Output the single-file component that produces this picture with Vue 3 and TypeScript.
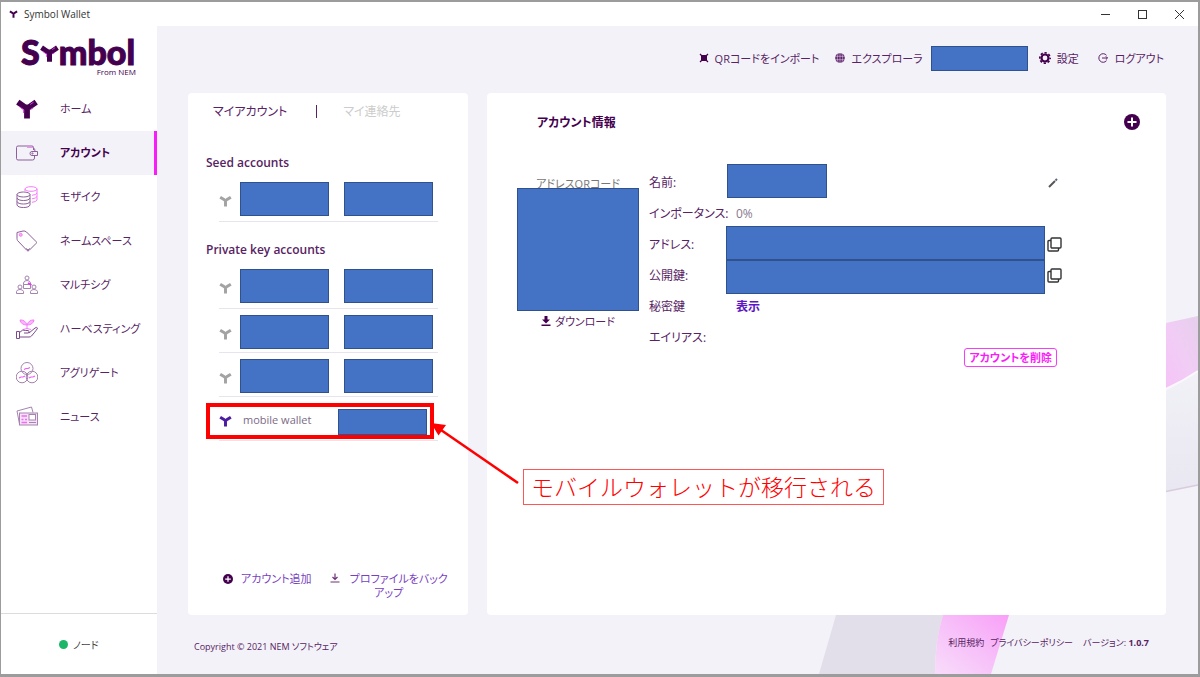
<script setup lang="ts">
interface NavItem {
  icon: string
  label: string
  active?: boolean
}

const navItems: NavItem[] = [
  { icon: 'i-home', label: 'ホーム' },
  { icon: 'i-wallet', label: 'アカウント', active: true },
  { icon: 'i-coins', label: 'モザイク' },
  { icon: 'i-tag', label: 'ネームスペース' },
  { icon: 'i-people', label: 'マルチシグ' },
  { icon: 'i-harvest', label: 'ハーベスティング' },
  { icon: 'i-aggregate', label: 'アグリゲート' },
  { icon: 'i-news', label: 'ニュース' },
]

const privateAccounts: number[] = [1, 2, 3]
</script>

<template>
  <svg class="defs" aria-hidden="true">
    <symbol id="i-y" viewBox="0 0 22 20">
      <path d="M2 3.500L9 8Q11 9 13 8L20 3.500M11 8V19.500" fill="none" stroke="currentColor" stroke-width="5" />
    </symbol>
    <symbol id="i-home" viewBox="0 0 22 22">
      <path d="M1.800 4.200L8.500 8.800Q11 10 13.500 8.800L20.200 4.200M11 9V20.500" fill="none" stroke="#44004e" stroke-width="5.800" />
      <path d="M3.500 8.800L7.600 11.800V15M14.200 6.500L17.500 4.200M14.500 11.500L17 10" fill="none" stroke="#e23bea" stroke-width="1" />
    </symbol>
    <symbol id="i-wallet" viewBox="0 0 22 22">
      <g fill="none" stroke="#8d5f9b">
        <path d="M17.500 8V5.500Q17.500 4 16 4H2Q.5 4 .5 5.500V16.500Q.5 18 2 18H16.500Q18.500 18 18.500 16V13.500" />
        <path d="M21.500 9.500H16A2 2 0 0 0 16 13.500H21.500Z" />
        <path d="M17.500 6Q19 6.500 19 9.500" />
        <circle cx="16.500" cy="11.500" r=".6" />
      </g>
      <path d="M11 5.500H17" stroke="#f48df7" />
    </symbol>
    <symbol id="i-coins" viewBox="0 0 22 22">
      <g fill="none" stroke="#f77bfa">
        <ellipse cx="15" cy="3" rx="6" ry="2.300" />
        <path d="M9 3V5M21 3V14Q20 16 16 16.300M21 7Q20 9 16 9.300M21 10.500Q20 12.500 16 12.800" />
      </g>
      <g fill="none" stroke="#8d5f9b">
        <ellipse cx="7.500" cy="8.500" rx="6.500" ry="2.500" />
        <path d="M1 8.500V19Q2 21.500 7.500 21.500T14 19V8.500M1 12Q2 14.500 7.500 14.500T14 12M1 15.500Q2 18 7.500 18T14 15.500" />
      </g>
    </symbol>
    <symbol id="i-tag" viewBox="0 0 22 22">
      <path d="M1 2.500L7 1Q9 .7 10.500 2L20 11.500Q21 12.500 20 13.500L13 20.500Q12 21.500 11 20.500L1.500 10.500Q1 9.500 1 8.500Z" fill="none" stroke="#8d5f9b" />
      <path d="M10 18.500L12 20L14 18.500" fill="none" stroke="#8d5f9b" />
      <circle cx="4.700" cy="4.800" r="1.500" fill="#fba9fb" stroke="#f77bfa" />
    </symbol>
    <symbol id="i-people" viewBox="0 0 22 22">
      <g fill="none" stroke="#a583b0">
        <circle cx="11" cy="4" r="2" />
        <path d="M7.500 10.500V9Q8 6.500 11 6.500T14.500 9V10.500Z" />
        <circle cx="4" cy="13" r="2" />
        <path d="M.5 19.500V17.500Q1 15.500 4 15.500T7.500 17.500V19.500Z" />
        <circle cx="18" cy="13" r="2" />
        <path d="M14.500 19.500V17.500Q15 15.500 18 15.500T21.500 17.500V19.500Z" />
        <path d="M7.500 10.500V14.500H14.500V10.500" />
      </g>
      <path d="M12 9L15.500 11" stroke="#e23bea" stroke-width="1.500" />
    </symbol>
    <symbol id="i-harvest" viewBox="0 0 22 22">
      <g fill="#fcb6fc" stroke="#f77bfa">
        <path d="M11 7Q9 1.500 4 2Q5 7 11 7Q13 1.500 18 2Q17 7 11 7Z" />
        <path d="M11 7V11M7 11.500Q11 9.500 15 11.500" fill="none" />
      </g>
      <path d="M.5 13.500H3.500V20.500H.5ZM3.500 14.500Q7 10.500 9.500 12.500H12Q14 13 12.500 15H8M13 15L19 10Q21 8.800 21.500 10Q21.500 11 15.500 18Q14.500 19 13 19H3.500" fill="none" stroke="#7c4b8b" />
    </symbol>
    <symbol id="i-aggregate" viewBox="0 0 22 22">
      <g fill="none" stroke="#a583b0">
        <circle cx="11" cy="6.500" r="6" />
        <circle cx="6" cy="15" r="5.800" />
        <circle cx="16" cy="15" r="5.800" />
      </g>
      <path d="M8 7.500L10 6.500L12 6.500L14 5.500M3 16L5 15L7 15L9 14M13 16L15 15L17 15L19 14" fill="none" stroke="#ee5cf3" stroke-width="1.200" />
    </symbol>
    <symbol id="i-news" viewBox="0 0 22 22">
      <g fill="none" stroke="#a583b0">
        <path d="M3.500 18L1 5L15.500 1L17 6.500" />
        <rect x="3.500" y="7" width="18" height="12" fill="#f7e2f8" />
        <rect x="13" y="8.500" width="6.500" height="5.500" fill="#fff" />
        <path d="M13 16.500H20" />
      </g>
      <path d="M5.500 10H11M5.500 13.500H7.500M9 13.500H11M5.500 16.500H11" stroke="#f26af6" stroke-width="1.500" />
    </symbol>
    <symbol id="i-plus" viewBox="0 0 16 16">
      <circle cx="8" cy="8" r="8" fill="#44004e" />
      <path d="M8 3.500V12.500M3.500 8H12.500" stroke="#fff" stroke-width="2" />
    </symbol>
    <symbol id="i-copy" viewBox="0 0 15 15">
      <g fill="none" stroke="#333" stroke-width="1.400">
        <rect x="4" y="1" width="10" height="10" rx="1" />
        <path d="M4 3.500H2Q1 3.500 1 4.500V13Q1 14 2 14H10.500Q11.500 14 11.500 13V11" />
      </g>
    </symbol>
  </svg>

  <div class="window">
    <header class="titlebar">
      <svg class="tb-logo"><use href="#i-y" /></svg>
      <span>Symbol Wallet</span>
      <div class="win-btns">
        <button type="button" aria-label="最小化"><svg viewBox="0 0 11 11"><path d="M1 5.500H10" /></svg></button>
        <button type="button" aria-label="最大化"><svg viewBox="0 0 11 11"><rect x="1.500" y="1.500" width="8" height="8" /></svg></button>
        <button type="button" aria-label="閉じる"><svg viewBox="0 0 11 11"><path d="M1 1L10 10M10 1L1 10" /></svg></button>
      </div>
    </header>

    <div class="body">
      <aside class="sidebar">
        <div class="logo">
          <div class="wordmark">S<svg class="logo-y" viewBox="0 0 22 22"><use href="#i-home" /></svg>mbol</div>
          <div class="from">From NEM</div>
        </div>
        <nav>
          <a v-for="item in navItems" :key="item.label" href="#" :class="{ active: item.active }">
            <svg><use :href="'#' + item.icon" /></svg>
            <span>{{ item.label }}</span>
          </a>
        </nav>
        <div class="node"><i></i><span>ノード</span></div>
      </aside>

      <main class="main">
        <svg class="backdrop" viewBox="157 26 1041 648" preserveAspectRatio="xMaxYMax slice" aria-hidden="true">
          <defs>
            <linearGradient id="g-pink" x1="0" y1="1" x2="1" y2="0">
              <stop offset="0" stop-color="#f8dcfa" />
              <stop offset=".5" stop-color="#f7c0f9" />
              <stop offset="1" stop-color="#f99ff8" />
            </linearGradient>
            <linearGradient id="g-band" x1="0" y1="1" x2="1" y2="0">
              <stop offset="0" stop-color="#f5c3f7" />
              <stop offset=".5" stop-color="#f1cdf5" />
              <stop offset="1" stop-color="#e6cfec" />
            </linearGradient>
            <linearGradient id="g-fade" x1="0" y1="0" x2="0" y2="1">
              <stop offset="0" stop-color="#f1f1f7" />
              <stop offset="1" stop-color="#e9e7f1" />
            </linearGradient>
          </defs>
          <path d="M836 615H943Q935 640 935 674H819Z" fill="#e2dfea" />
          <path d="M943 615H1009L991 674H935Q935 640 943 615Z" fill="url(#g-pink)" />
          <path d="M1166 389L1198 371V485L1166 491Z" fill="url(#g-fade)" />
          <path d="M1166 323L1198 316V371Q1183 381 1166 389Z" fill="url(#g-band)" />
          <path d="M1166 389Q1183 381 1198 371" fill="none" stroke="#fbf8fd" stroke-width="2" />
          <path d="M1166 491.500L1198 485" stroke="#d8cbdc" stroke-width="1.500" />
        </svg>

        <div class="topbar">
          <a href="#" class="t-qr">
            <svg class="s10" viewBox="0 0 10 10"><path d="M2 2H8V8H2Z" fill="#44004e" /><path d="M1 1L3 3M9 1L7 3M1 9L3 7M9 9L7 7" fill="none" stroke="#44004e" stroke-width="1.200" /></svg>
            QRコードをインポート
          </a>
          <a href="#" class="t-ex">
            <svg class="s10" viewBox="0 0 10 10"><circle cx="5" cy="5" r="4.800" fill="#5c1f6a" /><path d="M0 3.300H10M0 6.700H10M5 0V10M3 .5Q1.500 5 3 9.500M7 .5Q8.500 5 7 9.500" fill="none" stroke="#d9cbe0" stroke-width=".6" /></svg>
            エクスプローラ
          </a>
          <div class="redact t-block"></div>
          <a href="#" class="t-set">
            <svg class="s12" viewBox="0 0 12 12"><circle cx="6" cy="6" r="3.500" fill="none" stroke="#44004e" stroke-width="2.200" /><circle cx="6" cy="6" r="5.200" fill="none" stroke="#44004e" stroke-width="1.600" stroke-dasharray="2.300 1.784" stroke-dashoffset="1.150" /></svg>
            設定
          </a>
          <a href="#" class="t-out">
            <svg class="s10" viewBox="0 0 10 10"><path d="M8.500 2.300A4.300 4.300 0 1 0 8.500 7.700M4 5H9.500M7.800 3.300L9.500 5L7.800 6.700" fill="none" stroke="#5c1f6a" /></svg>
            ログアウト
          </a>
        </div>

        <div class="cards">
          <section class="card accounts">
            <div class="tabs">
              <button type="button" class="tab">マイアカウント</button>
              <i></i>
              <button type="button" class="tab off">マイ連絡先</button>
            </div>

            <h2>Seed accounts</h2>
            <ul class="seed">
              <li>
                <svg class="y"><use href="#i-y" /></svg>
                <div class="redact"></div>
                <div class="redact"></div>
              </li>
            </ul>

            <h2>Private key accounts</h2>
            <ul>
              <li v-for="n in privateAccounts" :key="n">
                <svg class="y"><use href="#i-y" /></svg>
                <div class="redact"></div>
                <div class="redact"></div>
              </li>
              <li class="mobile">
                <svg class="y"><use href="#i-y" /></svg>
                <span>mobile wallet</span>
                <div class="redact"></div>
                <div class="highlight"></div>
                <svg class="arrow" viewBox="0 0 90 64" aria-hidden="true">
                  <path d="M10 8L87 61" stroke="#fe0000" stroke-width="2.600" />
                  <path d="M0 1L15 3L7.500 13.500Z" fill="#fe0000" />
                </svg>
                <div class="callout">モバイルウォレットが移行される</div>
              </li>
            </ul>

            <div class="actions">
              <button type="button" class="add"><svg class="s10"><use href="#i-plus" /></svg><span>アカウント追加</span></button>
              <button type="button" class="backup">
                <svg class="s10" viewBox="0 0 10 10"><path d="M5 .5V6M2.500 4L5 6.500L7.500 4M.5 9H9.500" fill="none" stroke="#6b3078" stroke-width="1.200" /></svg>プロファイルをバックアップ
              </button>
            </div>
          </section>

          <section class="card info">
            <div class="info-head">
              <h1>アカウント情報</h1>
              <button type="button" aria-label="追加"><svg><use href="#i-plus" /></svg></button>
            </div>
            <div class="info-body">
              <div class="qr">
                <div class="cap">アドレスQRコード</div>
                <div class="redact"></div>
                <a href="#">
                  <svg class="s10" viewBox="0 0 10 10"><path d="M3.500 0H6.500V3.500H9L5 7.500L1 3.500H3.500ZM.5 8.500H9.500V10H.5Z" fill="#44004e" /></svg>
                  ダウンロード
                </a>
              </div>
              <dl>
                <div class="row">
                  <dt>名前:</dt>
                  <dd><div class="redact name"></div>
                    <button type="button" class="edit" aria-label="編集"><svg class="s10" viewBox="0 0 10 10"><path d="M1 9L7 3" stroke="#555" stroke-width="2" /><path d="M7.500 2.500L9 1" stroke="#59638a" stroke-width="2" /></svg></button>
                  </dd>
                </div>
                <div class="row"><dt>インポータンス:</dt><dd class="text">0%</dd></div>
                <div class="row">
                  <dt>アドレス:</dt>
                  <dd><div class="redact wide"></div><button type="button" class="copy" aria-label="コピー"><svg><use href="#i-copy" /></svg></button></dd>
                </div>
                <div class="row">
                  <dt>公開鍵:</dt>
                  <dd><div class="redact wide below"></div><button type="button" class="copy" aria-label="コピー"><svg><use href="#i-copy" /></svg></button></dd>
                </div>
                <div class="row"><dt>秘密鍵</dt><dd class="text"><a href="#">表示</a></dd></div>
                <div class="row"><dt>エイリアス:</dt><dd></dd></div>
                <button type="button" class="delete">アカウントを削除</button>
              </dl>
            </div>
          </section>
        </div>

        <footer class="foot">
          <span>Copyright © 2021 NEM ソフトウェア</span>
          <div class="legal">
            <a href="#">利用規約</a>
            <a href="#" class="privacy">プライバシーポリシー</a>
            <span>バージョン: <b>1.0.7</b></span>
          </div>
        </footer>
      </main>
    </div>
  </div>
</template>

<style>
body {
  background: #c4c4c4;
}
</style>

<style scoped>
* {
  box-sizing: border-box;
}
.defs {
  position: absolute;
  width: 0;
  height: 0;
}
.window {
  display: flex;
  flex-direction: column;
  min-height: 100vh;
  border: solid #9c9c9c;
  border-width: 2px 2px 3px 1px;
  background: #fff;
  color: #572364;
  font-family: "Open Sans", "Noto Sans CJK JP", sans-serif;
  font-size: 11px;
  font-feature-settings: "palt";
}
button {
  margin: 0;
  padding: 0;
  border: 0;
  background: none;
  color: inherit;
  font: inherit;
  font-feature-settings: inherit;
}
a {
  color: inherit;
  text-decoration: none;
}
svg {
  flex: none;
  display: block;
}
.s10 {
  width: 10px;
  height: 10px;
}
.s12 {
  width: 12px;
  height: 12px;
}
.redact {
  flex: none;
  background: #4472c4;
  border: 1px solid #2f528f;
}

.titlebar {
  display: flex;
  align-items: center;
  height: 24px;
  padding-left: 8px;
  font-size: 10px;
  line-height: 12px;
  color: #333;
}
.tb-logo {
  width: 9px;
  height: 8px;
  margin-right: 6px;
  color: #44004e;
}
.win-btns {
  display: flex;
  margin-left: auto;
}
.win-btns button {
  display: grid;
  place-items: center;
  width: 37px;
  height: 22px;
}
.win-btns svg {
  width: 11px;
  height: 11px;
  fill: none;
  stroke: #333;
}

.body {
  flex: 1;
  display: flex;
}
.sidebar {
  display: flex;
  flex-direction: column;
  flex: none;
  width: 156px;
  background: #fff;
}
.logo {
  width: 135px;
  height: 61px;
  padding: 10px 0 0 20px;
  color: #44004e;
}
.wordmark {
  display: flex;
  align-items: center;
  height: 31px;
  font: 900 34px/31px Lato, sans-serif;
  -webkit-text-stroke: 1px #44004e;
}
.logo-y {
  width: 19px;
  height: 19px;
  margin-top: 4px;
}
.from {
  font-size: 8px;
  line-height: 8px;
  text-align: right;
  margin-top: 1px;
}
nav a {
  display: flex;
  align-items: center;
  height: 44px;
  padding-left: 15px;
  border-right: 3px solid transparent;
  line-height: 16px;
}
nav svg {
  width: 22px;
  height: 22px;
  margin-right: 22px;
}
nav .active {
  background: #f3f2f8;
  border-right-color: #fb1cfb;
  color: #44004e;
  font-weight: 600;
}
.node {
  display: flex;
  align-items: center;
  height: 61px;
  margin-top: auto;
  padding-left: 58px;
  border-top: 1px solid #dcdcdc;
  color: #444;
  font-size: 10px;
}
.node i {
  width: 9px;
  height: 9px;
  margin-right: 5px;
  border-radius: 50%;
  background: #1db568;
}

.main {
  position: relative;
  display: flex;
  flex-direction: column;
  flex: 1;
  min-width: 0;
  padding: 0 32px 0 31px;
  background: #f3f2f8;
}
.backdrop {
  position: absolute;
  inset: 0;
  width: 100%;
  height: 100%;
}
.topbar {
  position: relative;
  display: flex;
  justify-content: flex-end;
  align-items: center;
  height: 67px;
  padding: 0 2px 3px 0;
}
.topbar a {
  display: flex;
  align-items: center;
  gap: 6px;
  white-space: nowrap;
}
.topbar .t-ex {
  margin-left: 16px;
}
.t-block {
  width: 97px;
  height: 25px;
  margin: 0 11px 0 8px;
}
.topbar .t-out {
  gap: 7px;
  margin-left: 19px;
}

.cards {
  position: relative;
  display: flex;
  gap: 19px;
  flex: 1;
}
.card {
  background: #fff;
  border-radius: 4px;
}
.accounts {
  position: relative;
  z-index: 1;
  display: flex;
  flex-direction: column;
  flex: none;
  width: 280px;
  padding-left: 18px;
}
.tabs {
  display: flex;
  align-items: center;
  height: 36px;
  padding-left: 7px;
  margin-bottom: 25px;
  font-size: 12px;
}
.tabs i {
  width: 1px;
  height: 13px;
  margin: 0 26px 0 29px;
  background: #572364;
}
.off {
  color: #ccc;
}
h2 {
  margin: 0;
  height: 18px;
  font-size: 12px;
  line-height: 18px;
  font-weight: 600;
}
ul {
  margin: 0;
  padding: 6px 30px 0 13px;
  list-style: none;
}
.seed {
  margin-bottom: 19px;
}
li {
  position: relative;
  display: flex;
  align-items: flex-end;
  height: 44px;
  padding-bottom: 3px;
  border-bottom: 1px solid #e6e4ec;
}
li:first-child {
  padding-bottom: 5px;
}
.y {
  width: 13px;
  height: 12px;
  margin: 0 8px 9px 0;
  color: #a3a3a3;
}
li .redact {
  width: 89px;
  height: 34px;
  margin-right: 15px;
}
.mobile .y {
  margin-bottom: 10px;
  color: #4b1da0;
}
.mobile span {
  width: 94px;
  margin: 0 0 9px 3px;
  line-height: 16px;
  color: #7c6a86;
}
.mobile .redact {
  height: 26px;
  margin: 0 0 2px 1px;
}
.highlight {
  position: absolute;
  inset: 6px 4px 1px -13px;
  border: 4px solid #fe0000;
}
.arrow {
  position: absolute;
  left: 212px;
  top: 25px;
  width: 90px;
  height: 64px;
}
.callout {
  position: absolute;
  left: 304px;
  top: 72px;
  padding: 0 7px;
  border: 1px solid #f55;
  background: #fff;
  color: #fe0000;
  font-size: 23px;
  line-height: 34px;
  font-weight: 300;
  font-feature-settings: normal;
  white-space: nowrap;
}
.actions {
  display: flex;
  margin-top: auto;
  padding: 0 17px 15px 17px;
  color: #7a3fc0;
  line-height: 14px;
}
.add {
  display: flex;
  align-items: flex-start;
  gap: 8px;
  white-space: nowrap;
}
.add svg {
  margin-top: 2px;
}
.backup {
  flex: 1;
  margin-left: 15px;
  text-align: center;
}
.backup svg {
  display: inline-block;
  margin-right: 10px;
}

.info {
  flex: 1;
  min-width: 0;
}
.info-head {
  display: flex;
  align-items: center;
  justify-content: space-between;
  height: 58px;
  padding: 0 26px 0 50px;
}
h1 {
  margin: 0;
  font-size: 12px;
  font-weight: 600;
  color: #44004e;
}
.info-head svg {
  width: 16px;
  height: 16px;
}
.info-body {
  display: flex;
  gap: 10px;
  padding: 16px 104px 0 30px;
}
.qr {
  flex: none;
  width: 122px;
  padding-top: 9px;
  text-align: center;
}
.cap {
  height: 12px;
  line-height: 16px;
  color: #777;
}
.qr .redact {
  position: relative;
  height: 123px;
}
.qr a {
  display: flex;
  align-items: center;
  justify-content: center;
  gap: 4px;
  height: 20px;
}
dl {
  display: flex;
  flex-direction: column;
  flex: 1;
  min-width: 0;
  margin: 0;
  font-size: 12px;
  line-height: 16px;
}
.row {
  display: flex;
  align-items: center;
  height: 31px;
}
dt {
  flex: none;
  width: 77px;
  white-space: nowrap;
}
dd {
  display: flex;
  align-items: center;
  flex: 1;
  min-width: 0;
  height: 31px;
  margin: 0;
}
dd .redact {
  height: 34px;
  align-self: flex-end;
}
dd .name {
  width: 100px;
  margin-left: 1px;
}
dd .wide {
  flex: 1;
  margin-right: 2px;
}
dd .below {
  align-self: flex-start;
}
.text {
  padding-left: 10px;
  color: #86788e;
}
.text a {
  color: #5c14c4;
  font-weight: 700;
}
.edit {
  margin: 0 4px 0 auto;
}
.copy svg {
  width: 15px;
  height: 15px;
}
.delete {
  align-self: flex-end;
  margin: -5px 5px 0 0;
  padding: 0 4px;
  border: 1px solid #f93cf9;
  border-radius: 3px;
  color: #f91cf9;
  font-size: 11px;
  line-height: 17px;
  font-weight: 600;
}

.foot {
  position: relative;
  display: flex;
  justify-content: space-between;
  height: 59px;
  padding: 24px 17px 0 6px;
  font-size: 9px;
  line-height: 16px;
}
.legal {
  display: flex;
  gap: 6px;
  line-height: 8px;
}
.privacy {
  margin-right: 4px;
}
</style>
